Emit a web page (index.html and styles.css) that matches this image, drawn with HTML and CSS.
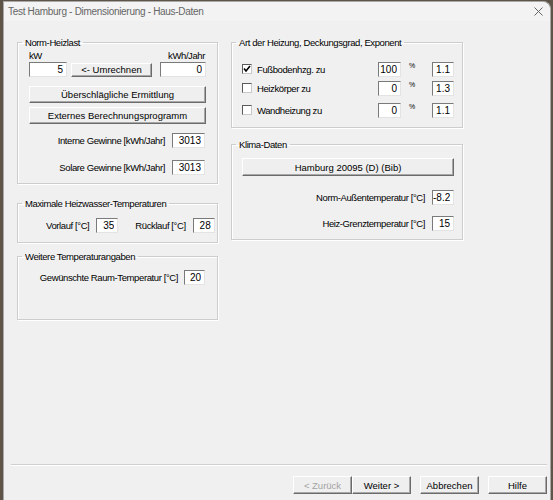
FILE: index.html
```html
<!DOCTYPE html>
<html lang="de">
<head>
  <meta charset="UTF-8">
  <title>Haus-Daten</title>
  <link rel="stylesheet" href="styles.css">
</head>
<body>
  <div class="window">
    <div class="titlebar">
      <span class="title">Test Hamburg - Dimensionierung - Haus-Daten</span>
      <svg class="close" width="9" height="9" viewBox="0 0 9 9">
        <path d="M0.5 0.5 L8.5 8.5 M8.5 0.5 L0.5 8.5" stroke="#666" stroke-width="1" fill="none"/>
      </svg>
    </div>

    <div class="content">
      <div class="col col-left">
        <fieldset class="group">
          <legend>Norm-Heizlast</legend>
          <div class="group-body g-heizlast">
            <div class="row units">
              <span>kW</span>
              <span>kWh/Jahr</span>
            </div>
            <div class="row">
              <input class="field w-kw" type="text" value="5">
              <button class="btn btn-umrechnen">&lt;- Umrechnen</button>
              <input class="field w-kwh" type="text" value="0">
            </div>
            <button class="btn btn-wide btn-first">Überschlägliche Ermittlung</button>
            <button class="btn btn-wide btn-second">Externes Berechnungsprogramm</button>
            <div class="row row-right gain-1">
              <label>Interne Gewinne [kWh/Jahr]</label>
              <input class="field w-gain" type="text" value="3013">
            </div>
            <div class="row row-right gain-2">
              <label>Solare Gewinne [kWh/Jahr]</label>
              <input class="field w-gain" type="text" value="3013">
            </div>
          </div>
        </fieldset>

        <fieldset class="group group-wasser">
          <legend>Maximale Heizwasser-Temperaturen</legend>
          <div class="group-body g-wasser">
            <div class="row">
              <label>Vorlauf [°C]</label>
              <input class="field w-temp" type="text" value="35">
              <label class="ruecklauf">Rücklauf [°C]</label>
              <input class="field w-temp" type="text" value="28">
            </div>
          </div>
        </fieldset>

        <fieldset class="group group-weitere">
          <legend>Weitere Temperaturangaben</legend>
          <div class="group-body g-weitere">
            <div class="row row-right">
              <label>Gewünschte Raum-Temperatur [°C]</label>
              <input class="field w-raum" type="text" value="20">
            </div>
          </div>
        </fieldset>
      </div>

      <div class="col col-right">
        <fieldset class="group">
          <legend>Art der Heizung, Deckungsgrad, Exponent</legend>
          <div class="group-body g-art">
            <div class="row heat-row heat-1">
              <span class="check">
                <svg width="8" height="8" viewBox="0 0 8 8"><path d="M1 3.5 L3 6 L7 1" stroke="#000" stroke-width="1.6" fill="none"/></svg>
              </span>
              <span class="heat-label">Fußbodenhzg. zu</span>
              <input class="field w-pct" type="text" value="100">
              <span class="pct">%</span>
              <input class="field w-exp" type="text" value="1.1">
            </div>
            <div class="row heat-row heat-2">
              <span class="check"></span>
              <span class="heat-label">Heizkörper zu</span>
              <input class="field w-pct" type="text" value="0">
              <span class="pct">%</span>
              <input class="field w-exp" type="text" value="1.3">
            </div>
            <div class="row heat-row heat-3">
              <span class="check"></span>
              <span class="heat-label">Wandheizung zu</span>
              <input class="field w-pct" type="text" value="0">
              <span class="pct">%</span>
              <input class="field w-exp" type="text" value="1.1">
            </div>
          </div>
        </fieldset>

        <fieldset class="group group-klima">
          <legend>Klima-Daten</legend>
          <div class="group-body g-klima">
            <button class="btn btn-ort">Hamburg 20095 (D) (Bib)</button>
            <div class="row row-right klima-1">
              <label>Norm-Außentemperatur [°C]</label>
              <input class="field w-klima" type="text" value="-8.2">
            </div>
            <div class="row row-right klima-2">
              <label>Heiz-Grenztemperatur [°C]</label>
              <input class="field w-klima" type="text" value="15">
            </div>
          </div>
        </fieldset>
      </div>
    </div>

    <div class="footer">
      <div class="separator"></div>
      <div class="nav">
        <button class="btn nav-btn" disabled>&lt; Zurück</button>
        <button class="btn nav-btn">Weiter &gt;</button>
        <button class="btn nav-btn gap">Abbrechen</button>
        <button class="btn nav-btn gap">Hilfe</button>
      </div>
    </div>
  </div>
</body>
</html>
```

FILE: styles.css
```css
html, body {
  margin: 0;
  height: 100%;
}

body {
  background: #5e5548;
  padding: 1px 0 0 3px;
  box-sizing: border-box;
  font-family: "Liberation Sans", Arial, sans-serif;
  font-size: 9.5px;
  letter-spacing: -0.4px;
  color: #000;
  overflow: hidden;
}

.window {
  width: 548px;
  height: 499px;
  box-sizing: border-box;
  background: #f0f0f0;
  border: 1px solid #a9a9a9;
  border-bottom: none;
  border-top-right-radius: 8px;
  display: flex;
  flex-direction: column;
}

.titlebar {
  height: 19px;
  display: flex;
  align-items: center;
  padding: 0 6px 0 4px;
  background: #f3f3f3;
  border-top-right-radius: 8px;
}

.title {
  flex: 1;
  font-size: 10px;
  letter-spacing: -0.3px;
  color: #666;
}

.close {
  margin-right: 1px;
}

.content {
  flex: 1;
  display: flex;
  gap: 13px;
  padding: 15px 0 0 13px;
}

.col {
  display: flex;
  flex-direction: column;
}

.col-left { width: 201px; }
.col-right { width: 232px; }

/* group boxes */
.group {
  display: block;
  margin: 0;
  padding: 0;
  border: 1px solid #cdcdcd;
  box-shadow: 1px 1px 0 #fff, inset 1px 1px 0 #fff;
  min-width: 0;
}

.group legend {
  padding: 0 3px;
  margin-left: 4px;
  line-height: 13px;
}

.row {
  display: flex;
  align-items: center;
}

.row-right {
  justify-content: flex-end;
}

.row label {
  margin-right: 7px;
}

/* inputs and buttons */
.field {
  box-sizing: border-box;
  height: 15px;
  margin: 0;
  padding: 0 3px 0 0;
  border: 1px solid;
  border-color: #7a7a7a #e3e3e3 #e3e3e3 #7a7a7a;
  background: #fff;
  font: inherit;
  font-size: 10px;
  letter-spacing: 0;
  text-align: right;
  outline: none;
}

.btn {
  display: block;
  box-sizing: border-box;
  margin: 0;
  padding: 0;
  height: 17px;
  font: inherit;
  color: #000;
  background: #efefef;
  border: 1px solid;
  border-color: #fff #6b6b6b #6b6b6b #fff;
  box-shadow: inset -1px -1px 0 #a8a8a8;
}

.btn:disabled {
  color: #a3a3a3;
}

/* Norm-Heizlast */
.g-heizlast {
  padding: 0 11px 8px 11px;
}

.units {
  justify-content: space-between;
  height: 13px;
  padding-right: 1px;
}

.w-kw { width: 38px; }
.btn-umrechnen { width: 81px; height: 14px; margin-left: 4px; }
.w-kwh { width: 46px; margin-left: auto; }

.btn-wide { width: 100%; }
.btn-first { margin-top: 9px; }
.btn-second { margin-top: 4px; }

.w-gain { width: 33px; }
.gain-1 { margin-top: 9px; padding-right: 1px; }
.gain-2 { margin-top: 12px; padding-right: 1px; }

/* Heizwasser */
.group-wasser { margin-top: 13px; }

.g-wasser {
  padding: 8px 0 9px 28px;
}

.w-temp { width: 22px; }
.ruecklauf { margin-left: 17px; }

/* Weitere */
.group-weitere { margin-top: 7px; }

.g-weitere {
  padding: 7px 12px 34px 0;
}

.w-raum { width: 21px; }
.g-weitere label { margin-right: 6px; }

/* Art der Heizung */
.g-art {
  padding: 13px 8px 10px 10px;
}

.heat-row {
  height: 14px;
}

.heat-2 { margin-top: 5px; }
.heat-3 { margin-top: 8px; }

.check {
  box-sizing: border-box;
  width: 10px;
  height: 10px;
  border: 1px solid;
  border-color: #5a5a5a #c8c8c8 #c8c8c8 #5a5a5a;
  background: #fff;
  display: flex;
  align-items: center;
  justify-content: center;
}

.heat-label {
  margin-left: 5px;
  width: 121px;
}

.w-pct { width: 23px; }

.pct {
  font-size: 7px;
  width: 31px;
  padding-left: 8px;
  box-sizing: border-box;
  align-self: flex-start;
}

.w-exp { width: 22px; }

/* Klima */
.group-klima { margin-top: 10px; }

.g-klima {
  padding: 7px 8px 8px 10px;
}

.btn-ort { height: 18px; width: 100%; }

.w-klima { width: 22px; }
.klima-1 { margin-top: 14px; }
.klima-2 { margin-top: 11px; }

/* footer */
.footer {
  padding: 0 3px 6px 7px;
}

.separator {
  height: 1px;
  background: #cfcfcf;
  border-bottom: 1px solid #fff;
}

.nav {
  display: flex;
  justify-content: flex-end;
  margin-top: 10px;
}

.nav-btn {
  width: 59px;
  height: 18px;
}

.nav-btn.gap { margin-left: 9px; }
```
